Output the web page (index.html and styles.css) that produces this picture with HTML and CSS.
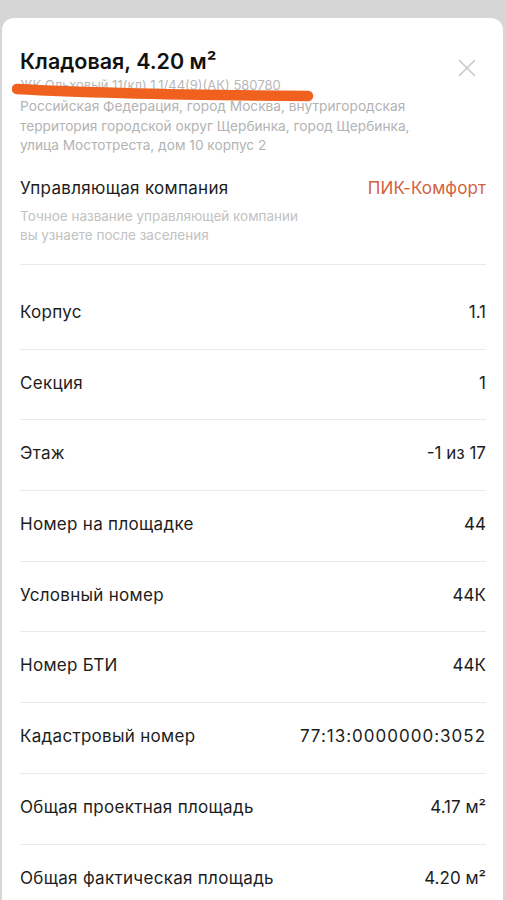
FILE: index.html
```html
<!DOCTYPE html>
<html lang="ru">
<head>
<meta charset="utf-8">
<title>Кладовая, 4.20 м²</title>
<link rel="stylesheet" href="styles.css">
</head>
<body>
<div class="card">
  <button class="close" aria-label="Закрыть">
    <svg viewBox="0 0 20 20" width="20" height="20"><path d="M2.5 2.5 L17.5 17.5 M17.5 2.5 L2.5 17.5" stroke="#c9c9c9" stroke-width="1.6" fill="none" stroke-linecap="round"/></svg>
  </button>
  <header class="head">
    <h1 class="title">Кладовая, 4.20 м²</h1>
    <div class="code">ЖК Ольховый 11(кл) 1.1/44(9)(АК) 580780</div>
    <p class="address">Российская Федерация, город Москва, внутригородская территория городской округ Щербинка, город Щербинка, улица Мостотреста, дом 10 корпус 2</p>
  </header>
  <svg class="scribble" viewBox="0 0 302 24" width="302" height="24"><path d="M5 7 C 60 10, 160 13, 296 14" stroke="#f0601f" stroke-width="10.5" fill="none" stroke-linecap="round"/></svg>
  <section class="company">
    <div class="company-top">
      <span class="label">Управляющая компания</span>
      <span class="company-name">ПИК-Комфорт</span>
    </div>
    <p class="company-note">Точное название управляющей компании<br>вы узнаете после заселения</p>
  </section>
  <ul class="props">
    <li class="row"><span class="label">Корпус</span><span class="value">1.1</span></li>
    <li class="row"><span class="label">Секция</span><span class="value">1</span></li>
    <li class="row"><span class="label">Этаж</span><span class="value">-1 из 17</span></li>
    <li class="row"><span class="label">Номер на площадке</span><span class="value">44</span></li>
    <li class="row"><span class="label">Условный номер</span><span class="value">44К</span></li>
    <li class="row"><span class="label">Номер БТИ</span><span class="value">44К</span></li>
    <li class="row"><span class="label">Кадастровый номер</span><span class="value value-long">77:13:0000000:3052</span></li>
    <li class="row"><span class="label">Общая проектная площадь</span><span class="value">4.17 м²</span></li>
    <li class="row"><span class="label">Общая фактическая площадь</span><span class="value">4.20 м²</span></li>
  </ul>
</div>
</body>
</html>
```
FILE: styles.css
```css
html, body {
  margin: 0;
  padding: 0;
}
body {
  background: #d6d6d6;
  font-family: Inter, "Open Sans", "Liberation Sans", sans-serif;
  color: #1b1b1b;
  overflow: hidden;
}
.card {
  position: relative;
  margin: 18px 3px 0 2px;
  background: #fff;
  border-radius: 12px 12px 0 0;
  padding: 30px 17px 0 18px;
  min-height: 900px;
}
.close {
  position: absolute;
  top: 40px;
  right: 26px;
  width: 20px;
  height: 20px;
  padding: 0;
  border: 0;
  background: none;
}
.close svg { display: block; }
.title {
  margin: 0;
  font-size: 21.5px;
  line-height: 26px;
  font-weight: 600;
  color: #111;
}
.code {
  margin-top: 2px;
  font-size: 13px;
  line-height: 18px;
  color: #b8b8b8;
}
.address {
  margin: 3px 0 0;
  max-width: 420px;
  font-size: 13.7px;
  line-height: 19.5px;
  color: #b3b3b3;
}
.scribble {
  position: absolute;
  left: 10px;
  top: 64px;
}
.company {
  margin-top: 21.5px;
  padding-bottom: 19.5px;
  border-bottom: 1px solid #e9e9e9;
}
.company-top {
  display: flex;
  justify-content: space-between;
  align-items: center;
  line-height: 22px;
}
.label {
  font-size: 17px;
  line-height: 22px;
  letter-spacing: 0.3px;
  color: #1d1d1d;
}
.company-name {
  font-size: 17px;
  letter-spacing: 0.1px;
  color: #d2623e;
}
.company-note {
  margin: 7.5px 0 0;
  font-size: 13.5px;
  line-height: 19px;
  color: #c2c2c2;
}
.props {
  list-style: none;
  margin: 14px 0 0;
  padding: 0;
}
.row {
  display: flex;
  justify-content: space-between;
  align-items: center;
  padding: 22px 0 25.7px;
  border-bottom: 1px solid #e9e9e9;
  line-height: 22px;
}
.value {
  font-size: 17px;
  color: #1d1d1d;
}
.value-long {
  letter-spacing: 1px;
}
```
